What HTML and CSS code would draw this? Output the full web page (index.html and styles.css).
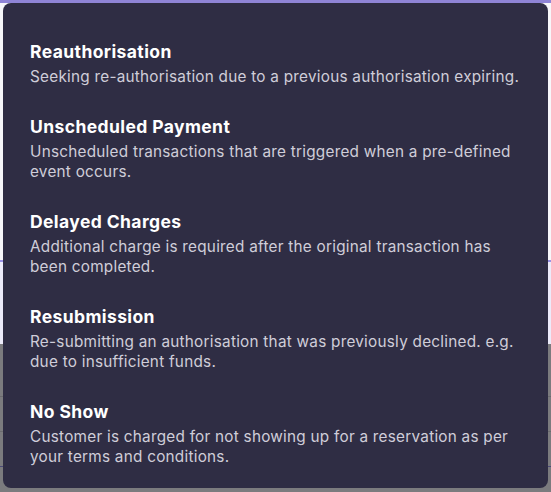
FILE: index.html
```html
<!DOCTYPE html>
<html lang="en">
<head>
    <meta charset="UTF-8">
    <meta name="viewport" content="width=device-width, initial-scale=1.0">
    <title>Payment types</title>
    <link rel="stylesheet" href="styles.css">
</head>
<body>
    <div class="page">
        <div class="field"></div>
        <div class="spacer"></div>
        <div class="row-line"></div>
        <div class="row-band"></div>
        <div class="backdrop">
            <div class="backdrop-line one"></div>
            <div class="backdrop-line two"></div>
            <div class="backdrop-line three"></div>
        </div>
    </div>

    <div class="tooltip">
        <div class="option">
            <h3>Reauthorisation</h3>
            <p>Seeking re-authorisation due to a previous authorisation expiring.</p>
        </div>
        <div class="option">
            <h3>Unscheduled Payment</h3>
            <p>Unscheduled transactions that are triggered when a pre-defined event occurs.</p>
        </div>
        <div class="option">
            <h3>Delayed Charges</h3>
            <p>Additional charge is required after the original transaction has been completed.</p>
        </div>
        <div class="option">
            <h3>Resubmission</h3>
            <p>Re-submitting an authorisation that was previously declined. e.g. due to insufficient funds.</p>
        </div>
        <div class="option">
            <h3>No Show</h3>
            <p>Customer is charged for not showing up for a reservation as per your terms and conditions.</p>
        </div>
    </div>
</body>
</html>
```

FILE: styles.css
```css
body {
    margin: 0;
    font-family: Inter, "Noto Sans", sans-serif;
    background-color: #ffffff;
    height: 492px;
    overflow: hidden;
    position: relative;
}
.page {
    display: flex;
    flex-direction: column;
    height: 492px;
}
.field {
    height: 3px;
    background-color: #8f84d6;
}
.spacer {
    height: 257px;
    background-color: #f7f7fa;
}
.row-line {
    height: 2px;
    background-color: #9a92e6;
}
.row-band {
    height: 82px;
    background-color: #ecebfa;
}
.backdrop {
    flex: 1;
    background-color: #7b7b7e;
    display: flex;
    flex-direction: column;
    padding-top: 52px;
    gap: 34px;
}
.backdrop-line {
    height: 1px;
    background-color: #6a6a6e;
}
.backdrop-line.three {
    background-color: #4b4a78;
}
.tooltip {
    position: absolute;
    top: 3px;
    left: 3px;
    width: 545px;
    height: 485px;
    box-sizing: border-box;
    padding: 37px 18px 0 27px;
    background-color: #2f2d44;
    border-radius: 8px;
    display: flex;
    flex-direction: column;
    gap: 27px;
}
.option h3 {
    margin: 0;
    color: #ffffff;
    font-size: 17.5px;
    font-weight: 700;
    line-height: 24px;
    letter-spacing: 0.4px;
}
.option p {
    margin: 3px 0 0;
    color: #cfcdd9;
    font-size: 15.3px;
    line-height: 20.5px;
    letter-spacing: 0.25px;
}
```
